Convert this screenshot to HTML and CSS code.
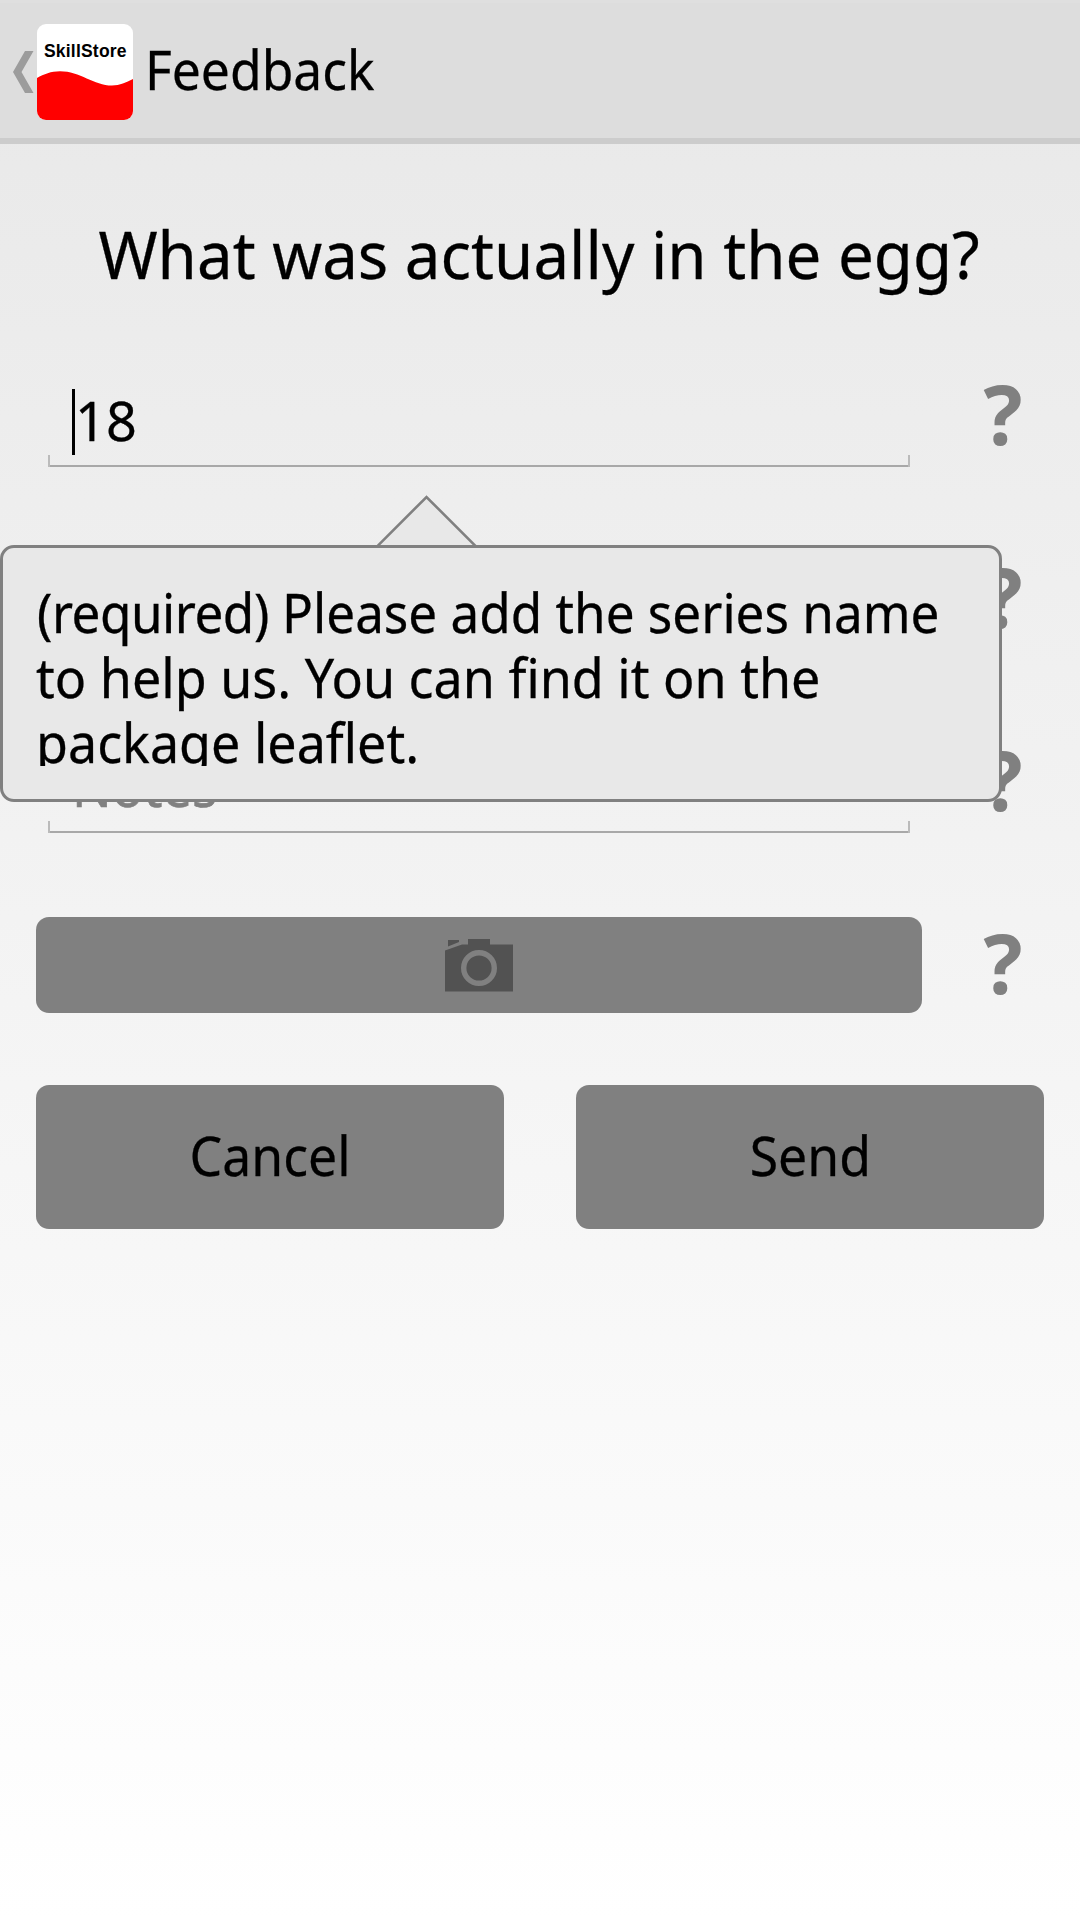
FILE: index.html
```html
<!DOCTYPE html>
<html lang="en">
<head>
<meta charset="utf-8">
<title>Feedback</title>
<link rel="stylesheet" href="styles.css">
</head>
<body>
<header class="bar">
  <svg class="back" width="21" height="42" viewBox="0 0 21 42"><path d="M12 0h8.500L8.500 21l12 21H12L0 21z" fill="#9c9c9c"/></svg>
  <div class="logo">
    <svg class="wave" width="96" height="96" viewBox="0 0 96 96"><path d="M0 54C7 50 14 47.200 23 47.200C43 47.200 57 61.500 75 61.500C83 61.500 89 58.500 96 55V96H0z" fill="#f00"/></svg>
    <span class="brand">SkillStore</span>
  </div>
  <span class="label">Feedback</span>
</header>
<main class="form">
  <h1 class="title"><span>What was actually in the egg?</span></h1>
  <div class="row">
    <div class="field"><i class="cursor"></i><span class="value">18</span></div>
    <span class="help">?</span>
    <aside class="tip">
      <svg class="arrow" width="100" height="50" viewBox="0 0 100 50"><path d="M0.500 51L49.500 2L98.500 51" fill="#e8e8e8" stroke="#808080" stroke-width="2.600"/></svg>
      <div class="tip-text"><span class="lead"><b class="tag">(required)</b> Please add the series name</span><span>to help us. You can find it on the</span><span>package leaflet.</span></div>
    </aside>
  </div>
  <div class="row">
    <div class="field"></div>
    <span class="help">?</span>
  </div>
  <div class="row">
    <div class="field"><span class="hint">Notes</span></div>
    <span class="help">?</span>
  </div>
  <div class="row photo-row">
    <button class="btn photo" aria-label="Add photo"><svg width="68" height="53" viewBox="0 0 68 53"><path d="M3 1H14V3L3 7.500zM0 11.500L17 5.500H23V0H45V5.500H68V52.500H0z" fill="#525252"/><circle cx="34" cy="29" r="15.300" fill="none" stroke="#808080" stroke-width="5.400"/></svg></button>
    <span class="help">?</span>
  </div>
  <div class="actions">
    <button class="btn"><span>Cancel</span></button>
    <button class="btn"><span>Send</span></button>
  </div>
</main>
</body>
</html>
```
FILE: styles.css
```css
* { box-sizing: border-box; }
body {
  margin: 0;
  height: 1920px;
  overflow: hidden;
  background: linear-gradient(#e8e8e8, #fff);
  font-family: "Noto Sans", sans-serif;
  font-size: 54px;
  color: #000;
}
.bar {
  display: flex;
  align-items: center;
  height: 144px;
  padding-left: 13px;
  background: #ddd;
  border-top: 3px solid #dfdfdf;
  border-bottom: 6px solid #ccc;
}
.back { margin: 3px 3px 0 0; }
.logo {
  position: relative;
  width: 96px;
  height: 96px;
  margin-top: 3px;
  border-radius: 9px;
  overflow: hidden;
  background: #fff;
}
.wave { display: block; }
.brand {
  position: absolute;
  left: 7px;
  top: 17px;
  font: bold 17.5px/20px "Liberation Sans", sans-serif;
  letter-spacing: 0.2px;
}
.label {
  margin: -3px 0 0 12px;
  line-height: 70px;
  transform: scaleX(0.955);
  transform-origin: 0 50%;
  -webkit-text-stroke: 0.3px;
}
.form { padding: 0 36px; }
.title {
  margin: 0;
  padding-top: 67px;
  height: 220px;
  font-size: 66px;
  font-weight: 400;
  line-height: 84px;
  text-align: center;
  white-space: nowrap;
}
.title span {
  display: inline-block;
  transform: translateX(-1px) scaleX(0.964);
  -webkit-text-stroke: 0.3px;
}
.row {
  position: relative;
  display: flex;
  height: 183px;
}
.field {
  display: flex;
  position: relative;
  width: 862px;
  height: 103px;
  margin-left: 12px;
  padding: 20px 0 0 24px;
  line-height: 72px;
  border-bottom: 2px solid #a8a8a8;
}
.field::before, .field::after {
  content: "";
  position: absolute;
  bottom: -2px;
  width: 2px;
  height: 12px;
  background: #bbb;
}
.field::before { left: 0; }
.field::after { right: 0; }
.cursor {
  width: 3px;
  height: 66px;
  margin-top: 5px;
  background: #000;
}
.value { -webkit-text-stroke: 0.3px; }
.hint {
  color: #808080;
  transform: scaleX(0.97);
  transform-origin: 0 50%;
  -webkit-text-stroke: 0.6px;
}
.help {
  width: 60px;
  margin-left: 63px;
  font: bold 82px/99px "Open Sans", sans-serif;
  text-align: center;
  color: #808080;
}
.tip {
  position: absolute;
  z-index: 2;
  left: -36px;
  top: 181px;
  width: 1002px;
  height: 257px;
  padding: 30px 27px;
  border: 3px solid #808080;
  border-radius: 14px;
  background: #e8e8e8;
}
.arrow { position: absolute; left: 374px; top: -53px; }
.tip-text {
  height: 188px;
  padding: 2px 0 0 6px;
  overflow: hidden;
  line-height: 65px;
  white-space: nowrap;
}
.tip-text > span {
  display: block;
  width: max-content;
  transform: scaleX(0.963);
  transform-origin: 0 50%;
  -webkit-text-stroke: 0.3px;
}
.tip-text > .lead { transform: translateX(1px) scaleX(0.948); }
.tag { font-weight: 400; letter-spacing: -0.5px; }
.btn {
  display: flex;
  align-items: center;
  justify-content: center;
  border: 0;
  padding: 0;
  border-radius: 13px;
  background: #808080;
  font: inherit;
  color: #000;
}
.btn span {
  margin-top: -4px;
  transform: scaleX(0.957);
  -webkit-text-stroke: 0.3px;
}
.photo-row { height: 172px; }
.photo { width: 886px; height: 96px; margin-top: 4px; }
.photo-row .help { margin-left: 51px; }
.actions { display: grid; grid-template-columns: 1fr 1fr; gap: 72px; }
.actions .btn { height: 144px; }
```
